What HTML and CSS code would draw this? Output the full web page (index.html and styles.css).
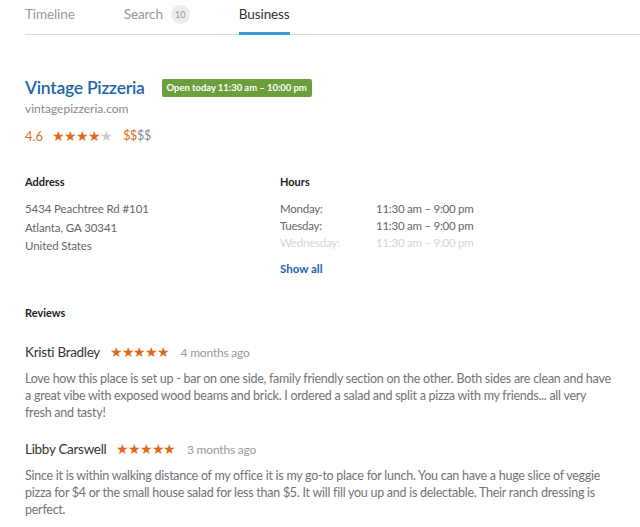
FILE: index.html
```html
<!DOCTYPE html>
<html>
<head>
<meta charset="utf-8">
<link rel="stylesheet" href="styles.css">
</head>
<body>
<nav class="tabs">
  <div class="tab">Timeline</div>
  <div class="tab">Search <span class="count">10</span></div>
  <div class="tab active">Business</div>
</nav>
<main class="content">
  <header class="biz">
    <div class="title-row">
      <h1 class="name">Vintage Pizzeria</h1>
      <span class="open">Open today 11:30 am – 10:00 pm</span>
    </div>
    <div class="url">vintagepizzeria.com</div>
    <div class="rating-row">
      <span class="score">4.6</span>
      <span class="stars">★★★★<span class="off">★</span></span>
      <span class="price">$$<span class="off">$$</span></span>
    </div>
  </header>
  <section class="info">
    <div class="col">
      <h2 class="head">Address</h2>
      <div class="addr">
        <div>5434 Peachtree Rd #101</div>
        <div>Atlanta, GA 30341</div>
        <div>United States</div>
      </div>
    </div>
    <div class="col">
      <h2 class="head">Hours</h2>
      <div class="hours">
        <span>Monday:</span><span>11:30 am – 9:00 pm</span>
        <span>Tuesday:</span><span>11:30 am – 9:00 pm</span>
        <span class="fade">Wednesday:</span><span class="fade">11:30 am – 9:00 pm</span>
      </div>
      <a class="show" href="#">Show all</a>
    </div>
  </section>
  <section class="reviews">
    <h2 class="head">Reviews</h2>
    <article class="review">
      <div class="rev-head"><span class="who">Kristi Bradley</span><span class="rstars">★★★★★</span><span class="when">4 months ago</span></div>
      <p class="text">Love how this place is set up - bar on one side, family friendly section on the other. Both sides are clean and have a great vibe with exposed wood beams and brick. I ordered a salad and split a pizza with my friends... all very fresh and tasty!</p>
    </article>
    <article class="review">
      <div class="rev-head"><span class="who">Libby Carswell</span><span class="rstars">★★★★★</span><span class="when">3 months ago</span></div>
      <p class="text">Since it is within walking distance of my office it is my go-to place for lunch. You can have a huge slice of veggie pizza for $4 or the small house salad for less than $5. It will fill you up and is delectable. Their ranch dressing is perfect.</p>
    </article>
  </section>
</main>
</body>
</html>
```
FILE: styles.css
```css
* { box-sizing: border-box; }
html, body { margin: 0; padding: 0; background: #fff; }
body {
  font-family: "Lato", "Open Sans", sans-serif;
  color: #666;
  font-size: 13px;
  width: 640px;
  overflow: hidden;
}
.tabs {
  display: flex;
  margin-left: 25px;
  border-bottom: 1px solid #dcdcdc;
  height: 35px;
}
.tab {
  font-size: 13.5px;
  letter-spacing: -0.1px;
  color: #999;
  padding-top: 6px;
  margin-right: 49px;
  display: flex;
  align-items: flex-start;
  height: 35px;
}
.tab.active {
  color: #333;
  border-bottom: 3px solid #3a9ad9;
  margin-bottom: -1px;
}
.count {
  display: inline-flex;
  align-items: center;
  justify-content: center;
  width: 19px;
  height: 19px;
  border-radius: 50%;
  background: #ececec;
  color: #999;
  font-size: 9px;
  letter-spacing: 0;
  margin-left: 8px;
  margin-top: -1px;
}
.content { padding: 0 25px; }
.biz { padding-top: 42px; }
.title-row { display: flex; align-items: center; gap: 17px; }
.name {
  margin: 0;
  font-size: 17.5px;
  letter-spacing: -0.25px;
  font-weight: 600;
  color: #1e65ad;
  line-height: 22px;
}
.open {
  background: #6a9f3c;
  color: #fff;
  font-size: 9.5px;
  font-weight: 700;
  letter-spacing: -0.05px;
  padding: 3px 5px;
  border-radius: 2px;
  line-height: 12px;
}
.url { font-size: 12px; color: #888; margin-top: 2px; line-height: 16px; }
.rating-row { display: flex; align-items: center; margin-top: 10px; font-size: 13px; }
.score { color: #d8701d; margin-right: 9px; }
.stars { color: #de6b1c; font-size: 14px; letter-spacing: -1px; margin-right: 11px; }
.stars .off { color: #ccc; }
.price { color: #de6b1c; font-size: 12.5px; letter-spacing: -0.3px; }
.price .off { color: #888; }
.info {
  display: grid;
  grid-template-columns: 255px 1fr;
  margin-top: 31px;
}
.head {
  margin: 0;
  font-size: 11px;
  font-weight: 700;
  color: #222;
  line-height: 14px;
}
.addr { margin-top: 11px; font-size: 11.5px; line-height: 18.5px; letter-spacing: -0.1px; }
.hours {
  margin-top: 11px;
  display: grid;
  grid-template-columns: 96px 1fr;
  font-size: 11.5px;
  letter-spacing: -0.25px;
  line-height: 17px;
}
.hours .fade { color: #d4d4d4; }
.show {
  display: inline-block;
  margin-top: 11px;
  color: #1e65ad;
  font-weight: 700;
  font-size: 11.5px;
  text-decoration: none;
}
.reviews { margin-top: 30px; }
.review { margin-top: 24px; }
.review + .review { margin-top: 20px; }
.rev-head { display: flex; align-items: center; }
.who { font-size: 13.5px; letter-spacing: -0.3px; color: #333; margin-right: 10px; }
.rstars { color: #de6b1c; font-size: 13.5px; letter-spacing: -1.3px; margin-right: 12px; }
.when { color: #999; font-size: 12px; letter-spacing: -0.2px; }
.text { margin: 10px 0 0; font-size: 12.5px; letter-spacing: -0.26px; line-height: 17px; color: #737373; }
```
